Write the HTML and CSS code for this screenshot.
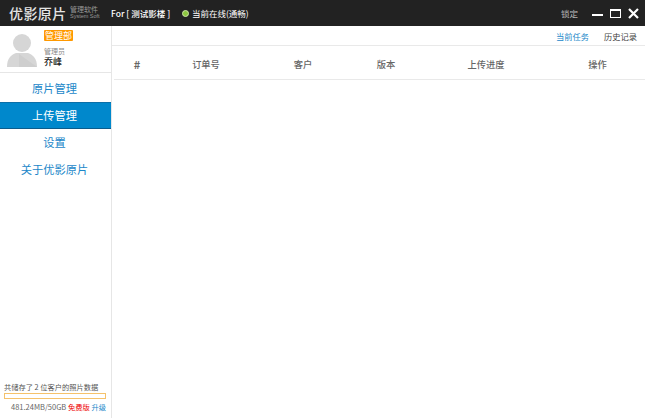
FILE: index.html
```html
<!DOCTYPE html>
<html lang="zh">
<head>
<meta charset="utf-8">
<title>优影原片</title>
<link rel="stylesheet" href="styles.css">
</head>
<body>
<header class="titlebar">
  <div class="brand">优影原片</div>
  <div class="brand-sub"><span class="sub-cn">管理软件</span><span class="sub-en">System Soft</span></div>
  <div class="studio">For [ 测试影楼 ]</div>
  <div class="status"><span class="dot"></span>当前在线(通畅)</div>
  <div class="win">
    <span class="lock">锁定</span>
    <svg class="ctl" width="11" height="11" viewBox="0 0 11 11"><rect x="0" y="6" width="11" height="2" fill="#fff"/></svg>
    <svg class="ctl" width="11" height="11" viewBox="0 0 11 11"><rect x="0.5" y="1.5" width="10" height="8" fill="none" stroke="#fff"/><rect x="0" y="1" width="11" height="2" fill="#fff"/></svg>
    <svg class="ctl" width="11" height="11" viewBox="0 0 11 11"><path d="M1 1l9 9M10 1l-9 9" stroke="#fff" stroke-width="2.2" fill="none"/></svg>
  </div>
</header>
<div class="main">
  <aside class="side">
    <div class="user">
      <svg class="avatar" width="30" height="33" viewBox="0 0 30 33"><circle cx="15" cy="9" r="9" fill="#d6d6d6"/><path d="M0 33c0-9 4-12 9-14h12c5 2 9 5 9 14z" fill="#d6d6d6"/><path d="M12 20l18 13H12z" fill="#cecece"/></svg>
      <div class="user-info">
        <span class="dept">管理部</span>
        <span class="role">管理员</span>
        <span class="name">乔峰</span>
      </div>
    </div>
    <nav class="nav">
      <a class="nav-item">原片管理</a>
      <a class="nav-item active">上传管理</a>
      <a class="nav-item">设置</a>
      <a class="nav-item">关于优影原片</a>
    </nav>
    <div class="storage">
      <div class="st-text">共储存了 2 位客户的照片数据</div>
      <div class="st-bar"></div>
      <div class="st-meta">481.24MB/50GB <span class="free">免费版</span> <span class="up">升级</span></div>
    </div>
  </aside>
  <section class="content">
    <div class="tabs">
      <span class="tab on">当前任务</span>
      <span class="tab">历史记录</span>
    </div>
    <div class="thead">
      <span class="hash">#</span>
      <span>订单号</span>
      <span>客户</span>
      <span>版本</span>
      <span>上传进度</span>
      <span>操作</span>
    </div>
  </section>
</div>
</body>
</html>
```
FILE: styles.css
```css
* { box-sizing: border-box; }
html, body { margin: 0; height: 100%; }
body {
  width: 645px;
  height: 418px;
  overflow: hidden;
  display: flex;
  flex-direction: column;
  background: #fff;
  font-family: "Noto Sans CJK SC", "Liberation Sans", sans-serif;
  font-size: 10px;
  color: #444;
}
.titlebar {
  height: 26px;
  flex: none;
  background: #222;
  color: #fff;
  display: flex;
  align-items: center;
  padding-left: 9px;
}
.brand { font-size: 14px; font-weight: 500; letter-spacing: 0.4px; width: 61px; color: #e4e4e4; white-space: nowrap; }
.brand-sub { display: flex; flex-direction: column; width: 41px; color: #999; line-height: 7px; font-size: 7px; white-space: nowrap; }
.sub-cn { font-size: 7px; }
.sub-en { font-size: 5.5px; font-family: "Liberation Sans", sans-serif; }
.studio { font-size: 8.5px; font-weight: 500; width: 71px; white-space: nowrap; }
.status { font-size: 8.5px; display: flex; align-items: center; white-space: nowrap; }
.dot { width: 7px; height: 7px; border-radius: 50%; background: #8cc63f; border: 1px solid #cde5a8; margin-right: 3px; }
.win { margin-left: auto; display: flex; align-items: center; padding-right: 6px; }
.lock { font-size: 8.5px; color: #bbb; margin-right: 7px; }
.ctl { margin-left: 7px; display: block; }
.main { flex: 1; display: flex; min-height: 0; }
.side {
  width: 112px;
  flex: none;
  border-right: 1px solid #e6e6e6;
  display: flex;
  flex-direction: column;
}
.user {
  height: 47px;
  border-bottom: 1px solid #e6e6e6;
  display: flex;
  padding: 7px 0 0 7px;
  flex: none;
}
.avatar { margin-top: 1px; margin-right: 7px; flex: none; }
.user-info { display: flex; flex-direction: column; align-items: flex-start; margin-top: -3px; }
.dept { background: #f90; color: #fff; font-size: 9px; line-height: 11px; padding: 0 1px; border-radius: 1px; }
.role { font-size: 7px; line-height: 9px; color: #888; margin-top: 6px; }
.name { font-size: 9px; line-height: 11px; color: #222; font-weight: 500; }
.nav { padding-top: 2px; display: flex; flex-direction: column; }
.nav-item {
  height: 27px;
  line-height: 27px;
  text-align: center;
  font-size: 11.25px;
  color: #1b87c9;
  padding-right: 2px;
}
.nav-item.active { background: #0088cc; color: #fff; border-bottom: 1px solid #0a5c8c; border-top: 1px solid #0a6fa8; line-height: 25px; }
.storage { margin-top: auto; padding: 0 5px 5px 4px; }
.st-text { font-size: 7.25px; line-height: 11px; color: #555; white-space: nowrap; }
.st-bar { height: 6px; border: 1px solid #f5c26b; }
.st-meta { font-size: 7.5px; line-height: 12px; color: #666; margin-top: 2px; padding-left: 7px; white-space: nowrap; }
.free { color: #e00; font-size: 7.25px; }
.up { color: #1b87c9; font-size: 7.25px; }
.content { flex: 1; min-width: 0; }
.tabs {
  height: 20px;
  border-bottom: 1px solid #e9e9e9;
  padding: 1px 8px 0 0;
  display: flex;
  justify-content: flex-end;
  align-items: center;
  gap: 15px;
}
.tab { font-size: 8.25px; color: #444; }
.tab.on { color: #1b87c9; }
.thead {
  margin-left: 2px;
  height: 34px;
  padding-top: 3px;
  border-bottom: 1px solid #e9e9e9;
  display: grid;
  grid-template-columns: 46px 92px 102px 64px 136px 87px;
  align-items: center;
  text-align: center;
  font-size: 9.25px;
  font-weight: 500;
  color: #666;
}
.hash { font-size: 11px; font-weight: 700; }
```
